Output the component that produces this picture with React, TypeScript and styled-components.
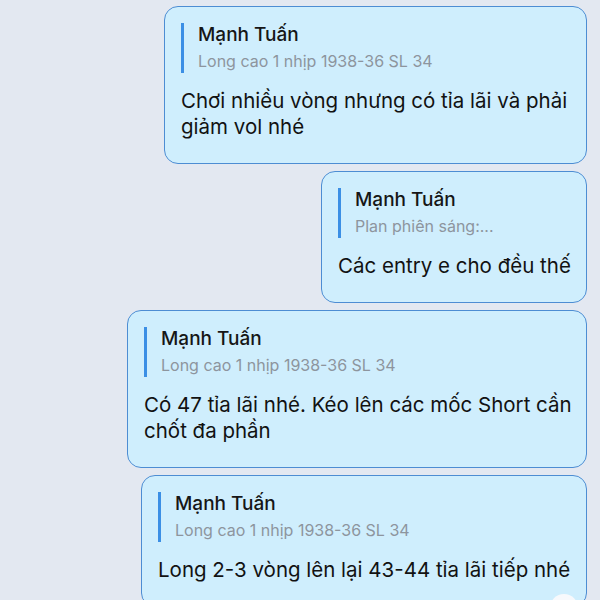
import React from 'react';
import styled, { createGlobalStyle } from 'styled-components';

const GlobalStyle = createGlobalStyle`
    html, body {
        margin: 0;
        padding: 0;
        overflow: hidden;
        background: #e3e8f1;
    }
`;

const Screen = styled.div`
    width: 600px;
    height: 600px;
    overflow: hidden;
    box-sizing: border-box;
    padding: 6px 13px 0 0;
    display: flex;
    flex-direction: column;
    align-items: flex-end;
    gap: 7px;
    background: #e3e8f1;
    font-family: Inter, 'Noto Sans', 'Liberation Sans', sans-serif;
`;

interface BubbleProps {
    width: number;
}

const Bubble = styled.div<BubbleProps>`
    position: relative;
    flex-shrink: 0;
    box-sizing: border-box;
    width: ${({ width }) => width}px;
    padding: 16px 8px 23px 16px;
    background: #cfeefd;
    border: 1.5px solid #4d8dd3;
    border-radius: 14px;
`;

const Reply = styled.div`
    display: flex;
    flex-direction: column;
    gap: 2px;
    border-left: 3px solid #3b8fe5;
    padding-left: 14px;
`;

const Sender = styled.div`
    font-size: 19px;
    line-height: 24px;
    font-weight: 500;
    color: #161616;
`;

const Quoted = styled.div`
    font-size: 16px;
    line-height: 24px;
    color: #8d959e;
`;

const Body = styled.div`
    margin-top: 15px;
    font-size: 20.5px;
    line-height: 26px;
    color: #121212;
`;

const Reaction = styled.div`
    position: absolute;
    right: 8px;
    bottom: -16px;
    width: 28px;
    height: 28px;
    border-radius: 50%;
    background: #f7f9fc;
`;

interface Message {
    width: number;
    quote: string;
    text: string;
    reaction?: boolean;
}

const messages: Message[] = [
    {
        width: 423,
        quote: 'Long cao 1 nhịp 1938-36 SL 34',
        text: 'Chơi nhiều vòng nhưng có tỉa lãi và phải giảm vol nhé',
    },
    {
        width: 266,
        quote: 'Plan phiên sáng:...',
        text: 'Các entry e cho đều thế',
    },
    {
        width: 460,
        quote: 'Long cao 1 nhịp 1938-36 SL 34',
        text: 'Có 47 tỉa lãi nhé. Kéo lên các mốc Short cần chốt đa phần',
    },
    {
        width: 446,
        quote: 'Long cao 1 nhịp 1938-36 SL 34',
        text: 'Long 2-3 vòng lên lại 43-44 tỉa lãi tiếp nhé',
        reaction: true,
    },
];

const App: React.FC = () => (
    <>
        <GlobalStyle />
        <Screen>
            {messages.map((m, i) => (
                <Bubble key={i} width={m.width}>
                    <Reply>
                        <Sender>Mạnh Tuấn</Sender>
                        <Quoted>{m.quote}</Quoted>
                    </Reply>
                    <Body>{m.text}</Body>
                    {m.reaction && <Reaction />}
                </Bubble>
            ))}
        </Screen>
    </>
);

export default App;
